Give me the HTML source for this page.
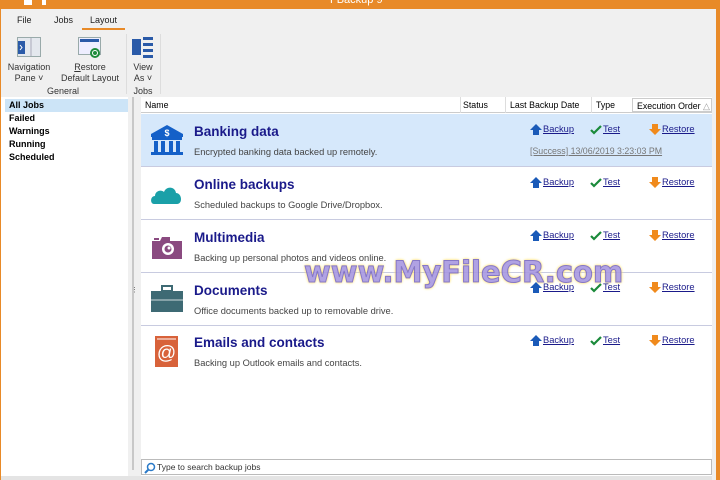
<!DOCTYPE html>
<html><head><meta charset="utf-8"><style>
*{margin:0;padding:0;box-sizing:border-box}
body{width:720px;height:480px;overflow:hidden;background:#f0f0f0;font-family:"Liberation Sans",sans-serif;position:relative;font-size:9px;color:#000}
.abs{position:absolute}
.title{left:0;top:0;width:720px;height:9px;background:#e88a28;overflow:hidden}
.tab{top:15px;font-size:9px;color:#222}
.rl{font-size:9px;color:#333;text-align:center;line-height:11px}
.left{left:1px;top:97px;width:127px;height:379px;background:#fff}
.left div{height:13px;line-height:13px;padding-left:8px;font-weight:bold;font-size:9px}
.main{left:141px;top:97px;width:571px;height:379px;background:#fff}
.hdr{left:0;top:0;width:571px;height:16px;border-bottom:1px solid #ccc;background:#fff;font-size:8.8px}
.hdr span{position:absolute;top:3px}
.row{left:0;width:571px;height:53px;border-bottom:1px solid #c8cbe0}
.nm{position:absolute;left:53px;top:10px;font-size:13.5px;font-weight:bold;color:#1a1a8a}
.ds{position:absolute;left:53px;top:33px;font-size:9.3px;color:#444}
.lk{position:absolute;top:11px;font-size:9.3px;color:#1a1a8a;text-decoration:underline}
.ic{position:absolute;left:9px;top:10px}
.wm{left:304px;top:255px;font-family:"DejaVu Sans",sans-serif;font-weight:bold;font-size:29px;color:#a898e0;letter-spacing:0;-webkit-text-stroke:1px #7a6ac0;text-shadow:0 0 3px #ffe680,0 0 3px #ffe680,0 0 2px #ffd040;opacity:.9}
</style></head><body>
<div class="abs title"><span class="abs" style="left:330px;top:-6px;color:#fff;font-size:11px">FBackup 9</span>
<div class="abs" style="left:24px;top:0;width:8px;height:5px;background:#fff"></div><div class="abs" style="left:42px;top:0;width:4px;height:5px;background:#fff"></div></div>
<div class="abs" style="left:0;top:9px;width:1px;height:471px;background:#e88a28"></div>
<div class="abs" style="left:716px;top:9px;width:4px;height:471px;background:#e88a28"></div>
<div class="abs" style="left:712px;top:9px;width:4px;height:471px;background:#f0f0f0"></div>
<span class="abs tab" style="left:17px">File</span>
<span class="abs tab" style="left:54px">Jobs</span>
<span class="abs tab" style="left:90px">Layout</span>
<div class="abs" style="left:82px;top:28px;width:43px;height:2px;background:#e88a28"></div>
<svg class="abs" style="left:17px;top:37px" width="24" height="20"><rect x="0.5" y="0.5" width="23" height="19" fill="#e4e8ee" stroke="#9aa"/><rect x="1" y="4" width="7" height="13" fill="#2a5aa8"/><path d="M3 8l2 2.5-2 2.5" stroke="#fff" fill="none"/><line x1="14" y1="1" x2="14" y2="19" stroke="#aab"/></svg>
<div class="abs rl" style="left:5px;top:62px;width:48px">Navigation<br>Pane ˅</div>
<svg class="abs" style="left:78px;top:37px" width="24" height="22"><rect x="0.5" y="0.5" width="22" height="17" fill="#eef" stroke="#9aa"/><rect x="2" y="2" width="19" height="3" fill="#2a5aa8"/><circle cx="17" cy="16" r="5" fill="#1e8c3a"/><circle cx="17" cy="16" r="2.5" fill="none" stroke="#fff"/></svg>
<div class="abs rl" style="left:58px;top:62px;width:64px"><u>R</u>estore<br>Default Layout</div>
<div class="abs rl" style="left:40px;top:86px;width:46px">General</div>
<div class="abs" style="left:126px;top:34px;width:1px;height:60px;background:#ddd"></div>
<svg class="abs" style="left:131px;top:35px" width="24" height="24"><rect x="1" y="4" width="9" height="16" fill="#2a5aa8"/><rect x="12" y="2" width="10" height="3" fill="#2a5aa8"/><rect x="12" y="8" width="10" height="3" fill="#2a5aa8"/><rect x="12" y="14" width="10" height="3" fill="#2a5aa8"/><rect x="12" y="20" width="10" height="3" fill="#2a5aa8"/></svg>
<div class="abs rl" style="left:128px;top:62px;width:30px">View<br>As ˅</div>
<div class="abs rl" style="left:128px;top:86px;width:30px">Jobs</div>
<div class="abs" style="left:160px;top:34px;width:1px;height:60px;background:#ddd"></div>

<div class="abs left">
<div style="background:#cce4f7;margin:2px 0 0 4px;padding-left:4px;height:13px">All Jobs</div>
<div>Failed</div><div>Warnings</div><div>Running</div><div>Scheduled</div></div>
<div class="abs" style="left:132px;top:97px;width:2px;height:373px;background:#c8c8c8"></div>
<div class="abs" style="left:131px;top:286px;font-size:7px;color:#555">⋮</div>

<div class="abs main">
<div class="abs hdr"><span style="left:4px">Name</span><span style="left:322px">Status</span><span style="left:369px">Last Backup Date</span><span style="left:455px">Type</span>
<div class="abs" style="left:491px;top:1px;width:80px;height:14px;border:1px solid #ccc;padding:2px 0 0 4px">Execution Order <span style="color:#999;position:static">△</span></div>
<div class="abs" style="left:319px;top:0;width:1px;height:16px;background:#ddd"></div>
<div class="abs" style="left:364px;top:0;width:1px;height:16px;background:#ddd"></div>
<div class="abs" style="left:450px;top:0;width:1px;height:16px;background:#ddd"></div></div>

<div class="abs row" style="top:17px;background:#d6e8fb">
<svg class="ic" width="34" height="32"><path d="M17 1L1 10v3h32v-3z" fill="#1460c8"/><rect x="2" y="13" width="30" height="3" fill="#1460c8"/><rect x="4" y="17" width="4" height="11" fill="#1460c8"/><rect x="11" y="17" width="4" height="11" fill="#1460c8"/><rect x="19" y="17" width="4" height="11" fill="#1460c8"/><rect x="26" y="17" width="4" height="11" fill="#1460c8"/><rect x="1" y="28" width="32" height="3" fill="#1460c8"/><text x="17" y="12" font-size="9" font-weight="bold" fill="#fff" text-anchor="middle" font-family="Liberation Sans">$</text></svg>
<div class="nm">Banking data</div><div class="ds">Encrypted banking data backed up remotely.</div>
<div class="ds" style="left:389px;top:32px;color:#777;text-decoration:underline;font-size:8.8px">[Success] 13/06/2019 3:23:03 PM</div></div>
<div class="abs row" style="top:70px"><svg class="ic" width="34" height="32"><path d="M4 27c-4 0-4-8 1-8 0-5 6-7 9-4 2-6 11-6 12 1 6 0 7 11 1 11z" fill="#1aa0a8"/></svg>
<div class="nm">Online backups</div><div class="ds">Scheduled backups to Google Drive/Dropbox.</div></div>
<div class="abs row" style="top:123px"><svg class="ic" width="34" height="32"><path d="M2 11h8l2-4h8v4h12v18H2z" fill="#8a4a80"/><rect x="4" y="8" width="5" height="2" fill="#8a4a80"/><circle cx="18" cy="19" r="6" fill="#fff"/><circle cx="18" cy="19" r="3.5" fill="#8a4a80"/><circle cx="19" cy="18" r="1.5" fill="#fff"/></svg>
<div class="nm">Multimedia</div><div class="ds">Backing up personal photos and videos online.</div></div>
<div class="abs row" style="top:176px"><svg class="ic" width="34" height="32"><rect x="12" y="3" width="10" height="5" fill="none" stroke="#3e6a74" stroke-width="2"/><rect x="1" y="8" width="32" height="21" fill="#3e6a74"/><line x1="1" y1="17" x2="33" y2="17" stroke="#fff" stroke-width="0.8"/></svg>
<div class="nm">Documents</div><div class="ds">Office documents backed up to removable drive.</div></div>
<div class="abs row" style="top:228px;border:none"><svg class="ic" width="34" height="34"><rect x="5" y="1" width="23" height="31" fill="#d8623a"/><line x1="7" y1="4" x2="26" y2="4" stroke="#fff"/><text x="16.5" y="24" font-size="19" fill="#fff" text-anchor="middle" font-family="Liberation Sans">@</text></svg>
<div class="nm">Emails and contacts</div><div class="ds">Backing up Outlook emails and contacts.</div></div>
</div>
<div class="abs" style="left:141px;top:459px;width:571px;height:16px;border:1px solid #bbb;background:#fff;font-size:8.5px;color:#333;padding:2px 0 0 15px">Type to search backup jobs
<svg class="abs" style="left:2px;top:2px" width="12" height="12"><circle cx="7" cy="5" r="3.5" fill="none" stroke="#2a7ac8" stroke-width="1.5"/><line x1="4.5" y1="7.5" x2="1" y2="11" stroke="#2a7ac8" stroke-width="2"/></svg></div>
<div class="abs" style="left:1px;top:476px;width:711px;height:4px;background:#e4e4e4"></div>
<div class="abs wm">www.MyFileCR.com</div>
<div class="abs" style="left:530px;top:124px">
<svg class="abs" style="left:0;top:0" width="12" height="11"><path d="M6 0L0 6h3v5h6V6h3z" fill="#1a5ab8"/></svg><span class="abs lk" style="left:13px;top:0px">Backup</span>
<svg class="abs" style="left:60px;top:1px" width="12" height="10"><path d="M1 5l3 3 7-7" stroke="#1a8a3a" stroke-width="2.2" fill="none"/></svg><span class="abs lk" style="left:73px;top:0px">Test</span>
<svg class="abs" style="left:119px;top:0" width="12" height="11"><path d="M6 11L0 5h3V0h6v5h3z" fill="#f08a1c"/></svg><span class="abs lk" style="left:132px;top:0px">Restore</span>
</div>
<div class="abs" style="left:530px;top:177px">
<svg class="abs" style="left:0;top:0" width="12" height="11"><path d="M6 0L0 6h3v5h6V6h3z" fill="#1a5ab8"/></svg><span class="abs lk" style="left:13px;top:0px">Backup</span>
<svg class="abs" style="left:60px;top:1px" width="12" height="10"><path d="M1 5l3 3 7-7" stroke="#1a8a3a" stroke-width="2.2" fill="none"/></svg><span class="abs lk" style="left:73px;top:0px">Test</span>
<svg class="abs" style="left:119px;top:0" width="12" height="11"><path d="M6 11L0 5h3V0h6v5h3z" fill="#f08a1c"/></svg><span class="abs lk" style="left:132px;top:0px">Restore</span>
</div>
<div class="abs" style="left:530px;top:230px">
<svg class="abs" style="left:0;top:0" width="12" height="11"><path d="M6 0L0 6h3v5h6V6h3z" fill="#1a5ab8"/></svg><span class="abs lk" style="left:13px;top:0px">Backup</span>
<svg class="abs" style="left:60px;top:1px" width="12" height="10"><path d="M1 5l3 3 7-7" stroke="#1a8a3a" stroke-width="2.2" fill="none"/></svg><span class="abs lk" style="left:73px;top:0px">Test</span>
<svg class="abs" style="left:119px;top:0" width="12" height="11"><path d="M6 11L0 5h3V0h6v5h3z" fill="#f08a1c"/></svg><span class="abs lk" style="left:132px;top:0px">Restore</span>
</div>
<div class="abs" style="left:530px;top:282px">
<svg class="abs" style="left:0;top:0" width="12" height="11"><path d="M6 0L0 6h3v5h6V6h3z" fill="#1a5ab8"/></svg><span class="abs lk" style="left:13px;top:0px">Backup</span>
<svg class="abs" style="left:60px;top:1px" width="12" height="10"><path d="M1 5l3 3 7-7" stroke="#1a8a3a" stroke-width="2.2" fill="none"/></svg><span class="abs lk" style="left:73px;top:0px">Test</span>
<svg class="abs" style="left:119px;top:0" width="12" height="11"><path d="M6 11L0 5h3V0h6v5h3z" fill="#f08a1c"/></svg><span class="abs lk" style="left:132px;top:0px">Restore</span>
</div>
<div class="abs" style="left:530px;top:335px">
<svg class="abs" style="left:0;top:0" width="12" height="11"><path d="M6 0L0 6h3v5h6V6h3z" fill="#1a5ab8"/></svg><span class="abs lk" style="left:13px;top:0px">Backup</span>
<svg class="abs" style="left:60px;top:1px" width="12" height="10"><path d="M1 5l3 3 7-7" stroke="#1a8a3a" stroke-width="2.2" fill="none"/></svg><span class="abs lk" style="left:73px;top:0px">Test</span>
<svg class="abs" style="left:119px;top:0" width="12" height="11"><path d="M6 11L0 5h3V0h6v5h3z" fill="#f08a1c"/></svg><span class="abs lk" style="left:132px;top:0px">Restore</span>
</div>
</body></html>
